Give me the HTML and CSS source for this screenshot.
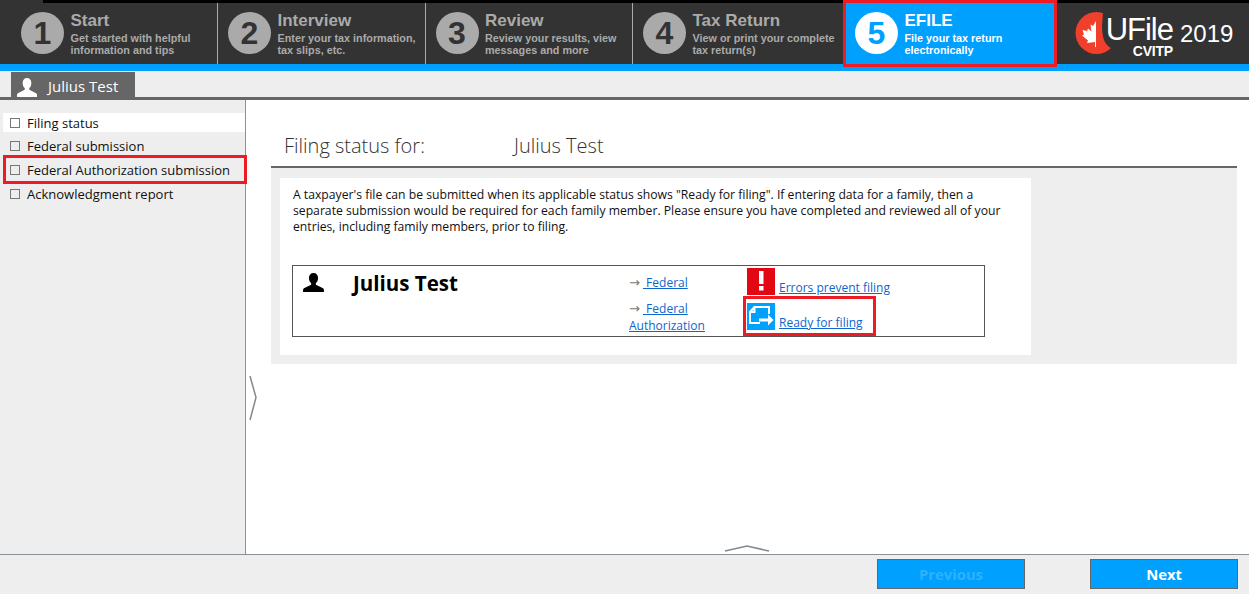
FILE: index.html
```html
<!DOCTYPE html>
<html>
	<head>
		<meta charset="utf-8" />
		<title>UFile CVITP 2019</title>
		<link rel="stylesheet" href="styles.css">
	</head>
	<body>
		<div class="topbar">
			<div class="step step-first">
				<div class="num">1</div>
				<div class="info"><h2>Start</h2><p>Get started with helpful<br>information and tips</p></div>
			</div>
			<div class="step">
				<div class="num">2</div>
				<div class="info"><h2>Interview</h2><p>Enter your tax information,<br>tax slips, etc.</p></div>
			</div>
			<div class="step">
				<div class="num">3</div>
				<div class="info"><h2>Review</h2><p>Review your results, view<br>messages and more</p></div>
			</div>
			<div class="step step-four">
				<div class="num">4</div>
				<div class="info"><h2>Tax Return</h2><p>View or print your complete<br>tax return(s)</p></div>
			</div>
			<div class="step step-on">
				<div class="num">5</div>
				<div class="info"><h2>EFILE</h2><p>File your tax return<br>electronically</p></div>
			</div>
			<div class="logo">
				<svg class="leaf" width="42" height="42" viewBox="0 0 42 42">
					<circle cx="21.500" cy="21" r="21" fill="#f0402b"/>
					<path d="M28 0l-1 14q0 18 9 22h8V0z" fill="#333"/>
					<path d="M21 9l-3 5-2.500-1.500 1 7-3.500-3-1 2.500-4.500-1 1.500 4.500-2 1 6 5-1 2.500 8-1v5h1z" fill="#fff"/>
				</svg>
				<div class="brand"><span class="ufile">UFile</span><span class="cvitp">CVITP</span></div>
				<span class="year">2019</span>
			</div>
		</div>

		<div class="tabs">
			<div class="tab">
				<svg width="20" height="19" viewBox="0 0 22 20" preserveAspectRatio="none"><path class="tab-person" d="M11 0c3 0 4.800 2.200 4.800 5.200 0 2.300-.9 4.300-2.300 5.300v1.800l7 3.500c.8.400 1.500 1.200 1.500 2.200v2H0v-2c0-1 .7-1.800 1.500-2.200l7-3.500v-1.800C7.100 9.500 6.200 7.500 6.200 5.200 6.200 2.200 8 0 11 0z"/></svg>
				<span>Julius Test</span>
			</div>
		</div>

		<div class="middle">
			<ul class="side">
				<li class="current"><i></i>Filing status</li>
				<li><i></i>Federal submission</li>
				<li class="marked"><i></i>Federal Authorization submission</li>
				<li><i></i>Acknowledgment report</li>
			</ul>
			<div class="main">
				<svg class="arrow-side" width="10" height="46" viewBox="0 0 10 46"><path d="M2 1l6 21.500-6 22.500" /></svg>
				<div class="title"><span class="title-label">Filing status for:</span><span>Julius Test</span></div>
				<div class="panel">
					<div class="sheet">
						<p class="intro">A taxpayer's file can be submitted when its applicable status shows "Ready for filing". If entering data for a family, then a separate submission would be required for each family member. Please ensure you have completed and reviewed all of your entries, including family members, prior to filing.</p>
						<div class="person">
							<svg class="person-icon" width="21" height="19" viewBox="0 0 22 20"><path d="M11 0c3 0 4.800 2.200 4.800 5.200 0 2.300-.9 4.300-2.300 5.300v1.800l7 3.500c.8.400 1.500 1.200 1.500 2.200v2H0v-2c0-1 .7-1.800 1.500-2.200l7-3.500v-1.800C7.100 9.500 6.200 7.500 6.200 5.200 6.200 2.200 8 0 11 0z"/></svg>
							<div class="person-name">Julius Test</div>
							<div class="forms">
								<div class="form-link"><span class="arr">&#8594;</span><a href="#">&nbsp;Federal</a></div>
								<div class="form-link"><span class="arr">&#8594;</span><a href="#">&nbsp;Federal</a><br><a href="#">Authorization</a></div>
							</div>
							<div class="states">
								<div class="state">
									<svg width="28" height="27" viewBox="0 0 28 27"><rect width="28" height="27" fill="#e30613"/><rect x="12" y="3" width="4.500" height="13" fill="#fff"/><rect x="12" y="18" width="4.500" height="4.500" fill="#fff"/></svg>
									<a href="#">Errors prevent filing</a>
								</div>
								<div class="state state-ready">
									<svg width="28" height="27" viewBox="0 0 28 27"><rect width="28" height="27" fill="#00a0ff"/><path d="M22 11V4H7.500L3 9v11h10M7.500 4v5H3" fill="none" stroke="#fff" stroke-width="2"/><path d="M12 15.500h9v-4l5.500 5.500-5.500 5.500v-4h-9z" fill="#fff"/></svg>
									<a href="#">Ready for filing</a>
								</div>
							</div>
						</div>
					</div>
				</div>
				<svg class="arrow-up" width="46" height="8" viewBox="0 0 46 8"><path d="M1 7l22-5 22 5" /></svg>
			</div>
		</div>

		<div class="bottom">
			<button class="btn btn-off">Previous</button>
			<button class="btn">Next</button>
		</div>
	</body>
</html>
```

FILE: styles.css
```css
* {
	padding: 0;
	margin: 0;
	box-sizing: border-box;
}

html, body {
	height: 594px;
	overflow: hidden;
}

body {
	display: flex;
	flex-direction: column;
	background-color: #fff;
	font-family: "Open Sans", "Liberation Sans", sans-serif;
	color: #111;
}

/* top steps */
.topbar {
	display: flex;
	height: 71px;
	background: linear-gradient(to right, #333 43px, #000 43px) top / 100% 3px no-repeat, #333;
	border-bottom: 7px solid #00a0ff;
	padding-top: 3px;
	font-family: "Liberation Sans", Arial, sans-serif;
	position: relative;
}

.step {
	display: flex;
	width: 207.500px;
	padding: 9px 0 0 10px;
	border-right: 1px solid #aaa;
	color: #aaa;
}

.step-first {
	width: 218px;
	padding-left: 21px;
}

.step-four {
	width: 206px;
	border-right: 0;
}

.num {
	width: 43px;
	height: 42px;
	border-radius: 50%;
	background-color: #aaa;
	color: #333;
	font-size: 32px;
	font-weight: bold;
	line-height: 42px;
	text-align: center;
	flex-shrink: 0;
}

.info {
	margin-left: 6.500px;
}

.info h2 {
	font-size: 17px;
	line-height: 19px;
	margin-top: -1px;
}

.info p {
	font-size: 10.800px;
	font-weight: bold;
	line-height: 12px;
	margin-top: 2px;
	white-space: nowrap;
}

.step-on {
	width: 208px;
	margin-left: 7px;
	padding-left: 9px;
	background-color: #00a0ff;
	color: #fff;
	border-right: 0;
	outline: 3px solid #ed1c24;
	height: 61px;
}

.step-on .num {
	background-color: #fff;
	color: #00a0ff;
}

.logo {
	display: flex;
	margin-left: 21px;
	padding-top: 9px;
	color: #fff;
}

.leaf {
	flex-shrink: 0;
}

.brand {
	display: flex;
	flex-direction: column;
	align-items: flex-end;
	margin-left: -10px;
	width: 66px;
}

.ufile {
	font-size: 31px;
	line-height: 31px;
	letter-spacing: -1px;
	margin-top: 2px;
}

.cvitp {
	font-size: 14px;
	font-weight: bold;
	line-height: 13px;
	letter-spacing: -.2px;
}

.year {
	font-size: 24px;
	line-height: 30px;
	margin: 7px 0 0 7px;
}

/* person tab */
.tabs {
	height: 29px;
	background-color: #eee;
	border-bottom: 3px solid #666;
	padding: 1px 0 0 11px;
}

.tab {
	display: flex;
	align-items: flex-end;
	width: 124px;
	height: 25px;
	background-color: #666;
	color: #fff;
	font-size: 15px;
	padding-left: 6px;
}

.tab span {
	margin-left: 11px;
	line-height: 22px;
}

.tab-person {
	fill: #fff;
}

/* middle */
.middle {
	flex: 1;
	display: flex;
	min-height: 0;
}

.side {
	width: 246px;
	flex-shrink: 0;
	list-style: none;
	background-color: #eee;
	border-right: 1px solid #8a9199;
	padding: 13px 0 0 3px;
	font-size: 13px;
}

.side li {
	display: flex;
	align-items: center;
	height: 19px;
	margin-bottom: 4.700px;
	padding-left: 7px;
	white-space: nowrap;
}

.side i {
	width: 10px;
	height: 10px;
	border: 1px solid #777;
	margin-right: 7px;
	flex-shrink: 0;
}

.side .current {
	background-color: #fff;
}

.side .marked {
	position: relative;
}

.side .marked::after {
	content: "";
	position: absolute;
	left: 0;
	right: -2px;
	top: -5px;
	bottom: -5px;
	border: 3px solid #ed1c24;
}

.main {
	flex: 1;
	min-width: 0;
	padding: 27px 12px 0 25px;
	position: relative;
}

.title {
	height: 41px;
	border-bottom: 2px solid #666;
	padding-left: 13px;
	font-size: 20px;
	font-weight: 300;
	line-height: 38px;
	color: #333;
	display: flex;
}

.title-label {
	width: 230px;
}

.panel {
	background-color: #eee;
	padding: 10px 206px 9px 9px;
}

.sheet {
	background-color: #fff;
	height: 177px;
	padding: 9px 12px 0;
}

.intro {
	font-size: 12.200px;
	line-height: 16px;
	height: 78px;
	padding-left: 1px;
}

.person {
	display: flex;
	width: 693px;
	height: 72px;
	border: 1px solid #555;
}

.person-icon {
	margin: 7px 0 0 10px;
	flex-shrink: 0;
}

.person-name {
	width: 276px;
	margin-left: 29px;
	font-size: 20.500px;
	font-weight: bold;
	line-height: 34px;
	color: #000;
}

.forms {
	width: 118px;
	font-size: 12px;
	line-height: 17px;
	padding-top: 8px;
}

.form-link {
	height: 17px;
	margin-bottom: 9px;
}

.arr {
	display: inline-block;
	width: 14px;
	line-height: 12px;
	color: #777;
	font-family: "DejaVu Sans", sans-serif;
	font-size: 13px;
}

a {
	color: #0d66d0;
}

.states {
	font-size: 12px;
	padding-top: 2px;
}

.state {
	display: flex;
	align-items: flex-end;
	height: 27px;
	margin-bottom: 8px;
	white-space: nowrap;
}

.state svg {
	flex-shrink: 0;
}

.state a {
	margin: 0 0 -1px 4px;
	line-height: 16px;
}

.state-ready {
	position: relative;
}

.state-ready::after {
	content: "";
	position: absolute;
	left: -4px;
	top: -7px;
	bottom: -6px;
	width: 127px;
	border: 3px solid #ed1c24;
}

.arrow-side {
	position: absolute;
	left: 2px;
	top: 275px;
}

.arrow-up {
	position: absolute;
	left: 478px;
	bottom: 2px;
}

.arrow-side path, .arrow-up path {
	fill: none;
	stroke: #888;
	stroke-width: 1.500;
}

/* bottom buttons */
.bottom {
	display: flex;
	justify-content: flex-end;
	gap: 65px;
	height: 40px;
	background-color: #eee;
	border-top: 1px solid #8a9199;
	padding: 4px 11px 0 0;
}

.btn {
	width: 148px;
	height: 30px;
	background-color: #00a0ff;
	border: 1px solid #666;
	color: #fff;
	font-family: "Open Sans", sans-serif;
	font-size: 14.800px;
	font-weight: bold;
}

.btn-off {
	color: #2eb2ff;
}
```
